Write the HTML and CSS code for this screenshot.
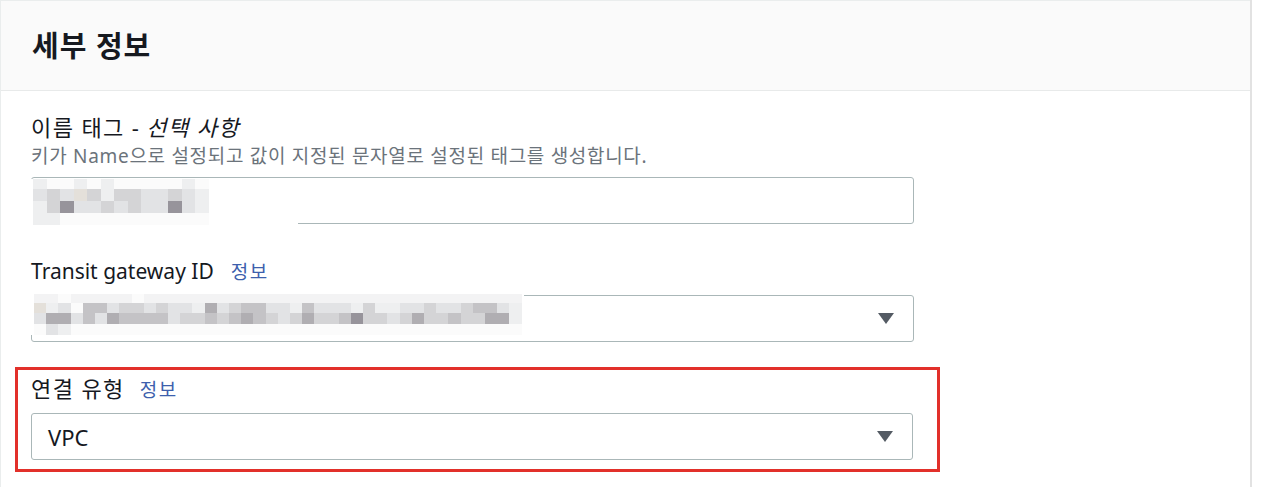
FILE: index.html
```html
<!DOCTYPE html>
<html lang="ko">
<head>
<meta charset="utf-8">
<title>세부 정보</title>
<link rel="stylesheet" href="styles.css">
</head>
<body>
<div class="page">
  <section class="panel">
    <header class="panel-header">
      <h2 class="panel-title">세부 정보</h2>
    </header>
    <div class="panel-body">
      <div class="field">
        <div class="label label-ko">이름 태그 - <em class="optional">선택 사항</em></div>
        <div class="desc">키가 Name으로 설정되고 값이 지정된 문자열로 설정된 태그를 생성합니다.</div>
        <div class="input">
          <div class="mosaic mosaic-a">
            <span class="k1"></span><span class="k0"></span><span class="k0"></span><span class="k1"></span><span class="k0"></span><span class="k1"></span><span class="k0"></span><span class="k0"></span><span class="k0"></span><span class="k0"></span><span class="k0"></span><span class="k1"></span><span class="k0"></span>
            <span class="k2"></span><span class="k3"></span><span class="k2"></span><span class="kb"></span><span class="k3"></span><span class="k1"></span><span class="k3"></span><span class="k3"></span><span class="k2"></span><span class="k2"></span><span class="k3"></span><span class="k2"></span><span class="k1"></span>
            <span class="k1"></span><span class="k3"></span><span class="k6"></span><span class="k2"></span><span class="k2"></span><span class="k3"></span><span class="k2"></span><span class="k3"></span><span class="k2"></span><span class="k2"></span><span class="k6"></span><span class="k2"></span><span class="k1"></span>
            <span class="k1"></span><span class="k1"></span><span class="k0"></span><span class="k0"></span><span class="k0"></span><span class="k0"></span><span class="k0"></span><span class="k0"></span><span class="k0"></span><span class="k0"></span><span class="k0"></span><span class="k0"></span><span class="k0"></span>
          </div>
        </div>
      </div>

      <div class="field field-gap">
        <div class="label">Transit gateway ID<a class="info">정보</a></div>
        <div class="select">
          <div class="mosaic mosaic-b">
            <span class="ka"></span><span class="ka"></span><span class="k0"></span><span class="ka"></span><span class="ka"></span><span class="ka"></span><span class="ka"></span><span class="ka"></span><span class="k0"></span><span class="ka"></span><span class="ka"></span><span class="ka"></span><span class="ka"></span><span class="ka"></span><span class="ka"></span><span class="ka"></span><span class="ka"></span><span class="ka"></span><span class="ka"></span><span class="ka"></span><span class="ka"></span><span class="ka"></span><span class="ka"></span><span class="ka"></span><span class="ka"></span><span class="ka"></span><span class="ka"></span><span class="ka"></span><span class="ka"></span><span class="ka"></span><span class="ka"></span><span class="ka"></span><span class="ka"></span><span class="ka"></span><span class="ka"></span><span class="ka"></span><span class="ka"></span><span class="ka"></span><span class="ka"></span><span class="ka"></span>
            <span class="kb"></span><span class="k1"></span><span class="k2"></span><span class="k0"></span><span class="k4"></span><span class="k4"></span><span class="k2"></span><span class="k3"></span><span class="k3"></span><span class="k2"></span><span class="k3"></span><span class="k2"></span><span class="k2"></span><span class="k1"></span><span class="k5"></span><span class="k2"></span><span class="k3"></span><span class="k4"></span><span class="k4"></span><span class="k2"></span><span class="k2"></span><span class="k1"></span><span class="k4"></span><span class="k2"></span><span class="k2"></span><span class="k2"></span><span class="k1"></span><span class="k3"></span><span class="k1"></span><span class="k1"></span><span class="k2"></span><span class="k2"></span><span class="k3"></span><span class="k2"></span><span class="k2"></span><span class="k3"></span><span class="k4"></span><span class="k4"></span><span class="k2"></span><span class="k1"></span>
            <span class="k2"></span><span class="k5"></span><span class="k5"></span><span class="k2"></span><span class="k4"></span><span class="k2"></span><span class="k5"></span><span class="k4"></span><span class="k4"></span><span class="k4"></span><span class="k4"></span><span class="k2"></span><span class="k3"></span><span class="k3"></span><span class="k4"></span><span class="k3"></span><span class="k4"></span><span class="k5"></span><span class="k4"></span><span class="k3"></span><span class="k2"></span><span class="k3"></span><span class="k5"></span><span class="k3"></span><span class="k3"></span><span class="k4"></span><span class="k6"></span><span class="k3"></span><span class="k3"></span><span class="k2"></span><span class="k3"></span><span class="k5"></span><span class="k3"></span><span class="k3"></span><span class="k4"></span><span class="k3"></span><span class="k3"></span><span class="k5"></span><span class="k5"></span><span class="k1"></span>
            <span class="k0"></span><span class="k2"></span><span class="k1"></span><span class="k0"></span><span class="k0"></span><span class="k0"></span><span class="k0"></span><span class="k0"></span><span class="k0"></span><span class="k0"></span><span class="k0"></span><span class="k0"></span><span class="k0"></span><span class="k0"></span><span class="k0"></span><span class="k0"></span><span class="k0"></span><span class="k0"></span><span class="k0"></span><span class="k0"></span><span class="k0"></span><span class="k0"></span><span class="k0"></span><span class="k0"></span><span class="k0"></span><span class="k0"></span><span class="k0"></span><span class="k0"></span><span class="k0"></span><span class="k0"></span><span class="k0"></span><span class="k0"></span><span class="k0"></span><span class="k0"></span><span class="k0"></span><span class="k0"></span><span class="k0"></span><span class="k0"></span><span class="k0"></span><span class="k0"></span>
          </div>
          <span class="caret"></span>
        </div>
      </div>

      <div class="field highlight">
        <div class="label label-ko">연결 유형<a class="info">정보</a></div>
        <div class="select">
          <span class="value">VPC</span>
          <span class="caret"></span>
        </div>
      </div>
    </div>
  </section>
</div>
</body>
</html>
```

FILE: styles.css
```css
* { box-sizing: border-box; }

body {
  margin: 0;
  background: #ffffff;
  font-family: "Noto Sans", "Noto Sans CJK KR", sans-serif;
  color: #16191f;
}

.page {
  display: flex;
  height: 487px;
  overflow: hidden;
}

.panel {
  width: 1252px;
  flex: none;
  border-left: 1px solid #eaeded;
  border-right: 2px solid #e2e2e2;
}

.panel-header {
  height: 91px;
  background: #fafafa;
  border-top: 1px solid #eaeded;
  border-bottom: 1px solid #e8eaea;
  padding-left: 31px;
  display: flex;
  align-items: center;
}

.panel-title {
  margin: 0;
  font-size: 29px;
  font-weight: 700;
  line-height: 1;
  letter-spacing: 1px;
  color: #16191f;
}

.panel-body {
  padding: 21px 0 0 30px;
}

.field {
  width: 883px;
}

.field-gap {
  margin-top: 32px;
}

.label {
  font-size: 21px;
  line-height: 30px;
  color: #16191f;
  display: flex;
  align-items: baseline;
}

.label-ko {
  font-size: 22px;
  letter-spacing: 1.4px;
}

.optional {
  font-style: italic;
  margin-left: 6px;
}

.info {
  font-size: 19px;
  letter-spacing: 1.5px;
  color: #3d5fad;
  margin-left: 17px;
  cursor: pointer;
}

.label-ko .info {
  margin-left: 15px;
}

.desc {
  margin-top: 1px;
  font-size: 19px;
  line-height: 26px;
  letter-spacing: 0.7px;
  color: #6b737b;
}

.input,
.select {
  position: relative;
  height: 47px;
  margin-top: 8px;
  border: 1px solid #aab7b8;
  border-radius: 3px;
  background: #ffffff;
}

.select {
  display: flex;
  align-items: center;
  justify-content: space-between;
  padding: 0 19px 0 16px;
}

.value {
  font-size: 22px;
  color: #16191f;
}

.caret {
  margin-left: auto;
  width: 0;
  height: 0;
  border-left: 8px solid transparent;
  border-right: 8px solid transparent;
  border-top: 11px solid #545b64;
}

.highlight {
  margin-top: 25px;
  margin-left: -16px;
  width: auto;
  max-width: 925px;
  border: 3px solid #e2302a;
  padding: 3px 24px 9px 13px;
}

.highlight .select {
  margin-top: 8px;
}

/* redaction mosaics */
.mosaic {
  position: absolute;
  display: grid;
  background: #ffffff;
}

.mosaic-a {
  left: -1px;
  top: 1px;
  width: 267px;
  height: 46px;
  padding-left: 2px;
  grid-template-columns: repeat(13, 13.5px);
  grid-template-rows: 10px 12px 12px 12px;
}

.mosaic-b {
  left: -1px;
  top: -2px;
  width: 493px;
  height: 41px;
  padding-left: 3px;
  grid-template-columns: repeat(40, 12.2px);
  grid-template-rows: 9px 10px 11px 11px;
}

.k0 { background: #fbfbfb; }
.ka { background: #f3f3f4; }
.k1 { background: #eeeff0; }
.k2 { background: #e2e3e5; }
.kb { background: #e4e0da; }
.k3 { background: #d4d4d6; }
.k4 { background: #c4c3c6; }
.k5 { background: #b0aeb2; }
.k6 { background: #97949b; }
```
